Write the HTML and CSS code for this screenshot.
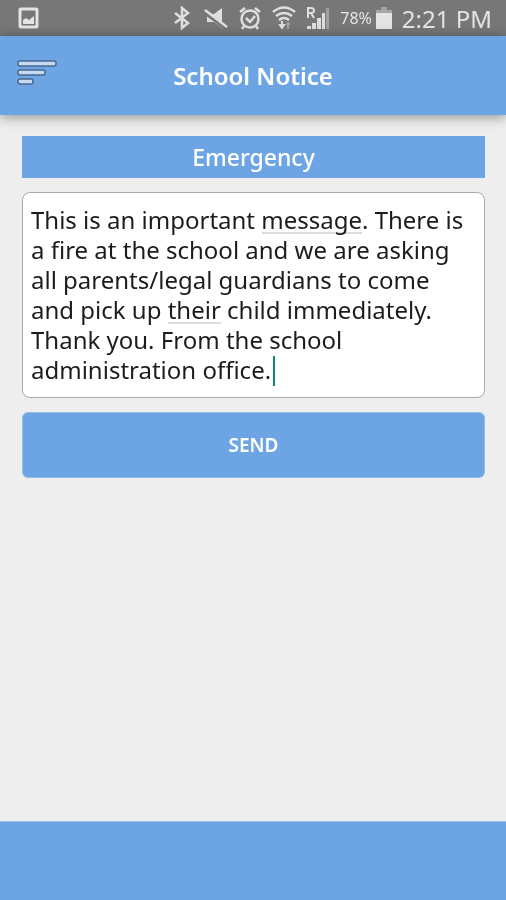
FILE: index.html
```html
<!DOCTYPE html>
<html lang="en">

<head>
    <meta charset="UTF-8">
    <meta name="viewport" content="width=device-width, initial-scale=1.0">
    <title>School Notice</title>
    <link rel="stylesheet" href="styles.css">
</head>

<body>
    <div class="status-bar">
        <svg class="status-icon picture" viewBox="0 0 22 24" aria-hidden="true">
            <rect x="2" y="3" width="17" height="18" rx="1" fill="none" stroke="#e4e4e4" stroke-width="3" />
            <path d="M5 18v-4l3-2 3 2 5-4v8z" fill="#e4e4e4" />
        </svg>
        <div class="status-right">
            <svg class="status-icon" viewBox="0 0 24 24" aria-hidden="true">
                <path d="M5 7l13 10-6 5V2l6 5L5 17" fill="none" stroke="#dedede" stroke-width="2.5" />
            </svg>
            <svg class="status-icon" viewBox="0 0 24 24" aria-hidden="true">
                <path d="M3 8h7l8-6v20l-8-6H3z" fill="#dedede" />
                <path d="M1 7l21 16" stroke="#777" stroke-width="3" />
                <path d="M1 4l22 17" stroke="#dedede" stroke-width="2.5" />
            </svg>
            <svg class="status-icon" viewBox="0 0 24 24" aria-hidden="true">
                <circle cx="12" cy="13" r="8.5" fill="none" stroke="#dedede" stroke-width="2.5" />
                <path d="M8 12l4 4 5-6M2 6l5-4M22 6l-5-4M6 20l-2 3M18 20l2 3" fill="none" stroke="#dedede" stroke-width="2.5" />
            </svg>
            <svg class="status-icon" viewBox="0 0 24 24" aria-hidden="true">
                <path d="M1 6q11-9 22 0M4 10q8-6 16 0M7 14q5-4 10 0" fill="none" stroke="#dedede" stroke-width="2.5" />
                <path d="M10 15v4M8 19h4l-2 3z" fill="#dedede" stroke="#dedede" stroke-width="2" />
                <path d="M16 23v-6M14 19l2-2 2 2" fill="none" stroke="#a0a0a0" stroke-width="2" />
            </svg>
            <svg class="status-icon" viewBox="0 0 24 24" aria-hidden="true">
                <path d="M2 12V2h3q3 0 3 2.500t-3 2.500H2M5 7l3 5" fill="none" stroke="#dedede" stroke-width="2" />
                <path d="M1 20h4v3H1zM6 17h4v6H6zM11 12h4v11h-4zM16 7h3v16h-3z" fill="#dedede" />
                <path d="M20 2h3v21h-3z" fill="#a0a0a0" />
            </svg>
            <span class="battery-level">78%</span>
            <svg class="battery" viewBox="0 0 16 22" aria-hidden="true">
                <path d="M5 0h6v3h5v4H0V3h5z" fill="#a5a5a5" />
                <path d="M0 6h16v16H0z" fill="#e4e4e4" />
            </svg>
            <span class="clock">2:21 PM</span>
        </div>
    </div>

    <header class="app-bar">
        <button class="menu-button" type="button" aria-label="Menu">
            <svg viewBox="0 0 40 26" aria-hidden="true">
                <g fill="#c5daf5" stroke="#49678c" stroke-width="1.500">
                    <rect x="1" y="1" width="38" height="5" rx="2" />
                    <rect x="1" y="10" width="27" height="5" rx="2" />
                    <rect x="1" y="19" width="15" height="5" rx="2" />
                </g>
            </svg>
        </button>
        <h1 class="app-title">School Notice</h1>
    </header>

    <main class="content">
        <form class="notice-form">
            <label class="notice-type" for="message">Emergency</label>
            <div class="message-box">
                <textarea class="message" id="message" rows="6" spellcheck="false">This is an important message. There is a fire at the school and we are asking all parents/legal guardians to come and pick up their child immediately. Thank you. From the school administration office.</textarea>
                <span class="spell-mark mark-message"></span>
                <span class="spell-mark mark-their"></span>
                <span class="caret"></span>
            </div>
            <button class="send-button" type="button">SEND</button>
        </form>
    </main>

    <footer class="bottom-bar"></footer>
</body>

</html>
```
FILE: styles.css
```css
* {
    box-sizing: border-box;
}

body {
    margin: 0;
    min-height: 100vh;
    display: flex;
    flex-direction: column;
    background: #eee;
    font-family: "Noto Sans", "Open Sans", sans-serif;
}

/* status bar */
.status-bar {
    display: flex;
    align-items: center;
    justify-content: space-between;
    height: 36px;
    padding: 0 14px 0 18px;
    background: #777;
    color: #e4e4e4;
}

.status-right {
    display: flex;
    align-items: center;
    gap: 10px;
}

.status-icon {
    width: 24px;
    height: 24px;
}

.picture {
    width: 22px;
}

.battery-level {
    font-size: 16px;
}

.battery {
    width: 16px;
    height: 22px;
    margin-left: -6px;
}

.clock {
    font-size: 24px;
}

/* header */
.app-bar {
    display: grid;
    grid-template-columns: 40px 1fr 40px;
    align-items: center;
    height: 79px;
    padding: 0 17px;
    background: #6da5e4;
    box-shadow: 0 2px 12px rgba(0, 0, 0, 0.4);
}

.menu-button {
    width: 40px;
    padding: 0 0 6px;
    border: 0;
    background: none;
}

.menu-button svg {
    display: block;
    width: 40px;
    height: 26px;
}

.app-title {
    margin: 0;
    color: #fff;
    font-size: 24px;
    font-weight: 600;
    text-align: center;
}

/* notice form */
.content {
    flex: 1;
    padding: 21px 21px 0 22px;
}

.notice-form {
    display: flex;
    flex-direction: column;
    gap: 14px;
}

.notice-type {
    height: 42px;
    background: #6da5e4;
    color: #fff;
    font-size: 23px;
    font-weight: 500;
    line-height: 42px;
    text-align: center;
}

.message-box {
    position: relative;
    display: flex;
}

.message {
    width: 100%;
    padding: 12px 8px;
    border: 1px solid #aaa;
    border-radius: 8px;
    outline: 0;
    background: #fff;
    color: #1c1c1c;
    font: 24px/30px "Noto Sans", "Open Sans", sans-serif;
    resize: none;
    overflow: hidden;
}

/* lie over the words without hiding their descenders */
.spell-mark {
    position: absolute;
    height: 2px;
    background: #ddd;
    mix-blend-mode: multiply;
}

.mark-message {
    top: 40px;
    left: 240px;
    width: 100px;
}

.mark-their {
    top: 130px;
    left: 146px;
    width: 53px;
}

.caret {
    position: absolute;
    top: 164px;
    left: 251px;
    width: 2px;
    height: 30px;
    background: #12896f;
}

.send-button {
    height: 66px;
    border: 1px solid #8fc0ee;
    border-radius: 6px;
    background: #6da5e4;
    color: #fff;
    font: 600 19px "Noto Sans", "Open Sans", sans-serif;
}

.bottom-bar {
    height: 79px;
    border-top: 1px solid #a3c1e0;
    background: #6da5e4;
}
```
